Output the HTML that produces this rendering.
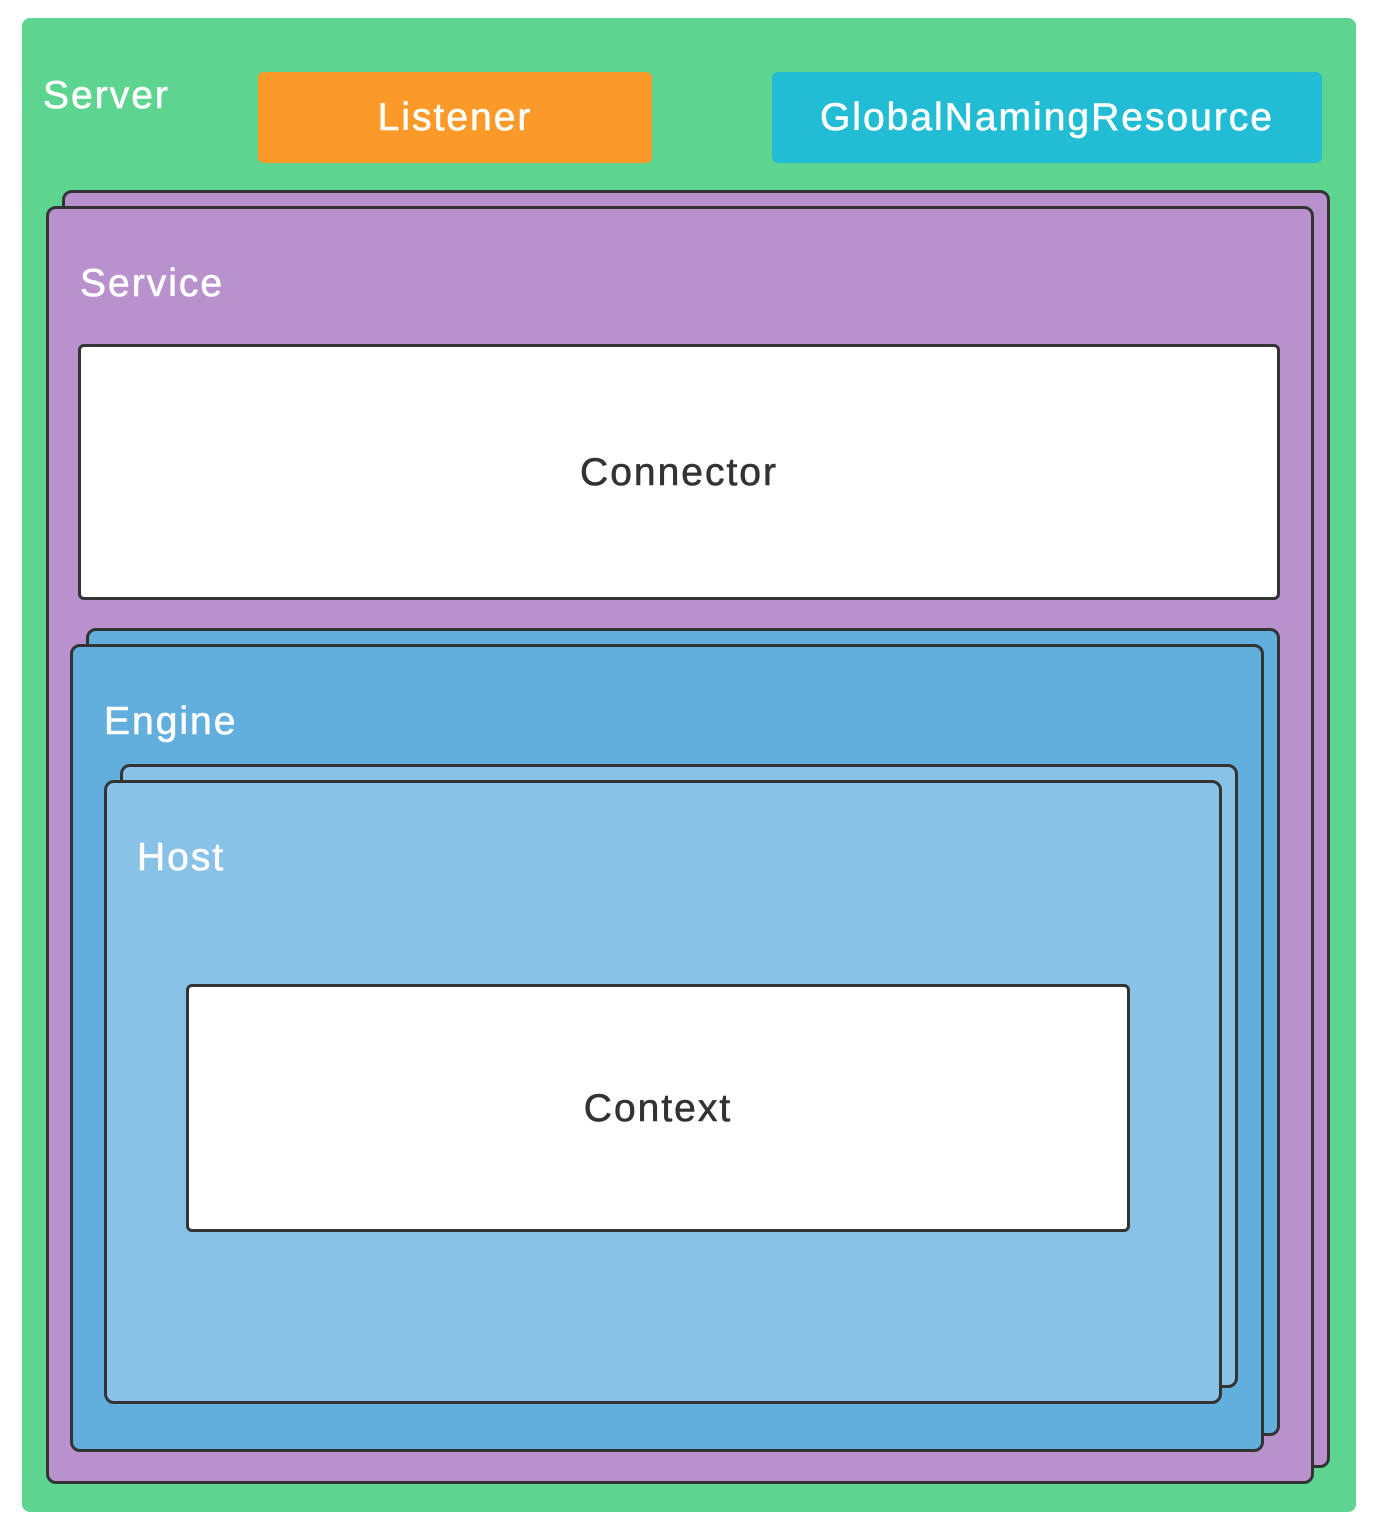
<!DOCTYPE html>
<html><head><meta charset="utf-8"><style>
html,body{margin:0;padding:0;background:#fff;width:1378px;height:1534px;overflow:hidden;position:relative;font-family:"Liberation Sans",sans-serif}
div{position:absolute;box-sizing:border-box}
.t{font-size:39px;letter-spacing:2px;color:#fff;line-height:1;white-space:nowrap;-webkit-text-stroke:0.6px currentColor}
.c{display:flex;align-items:center;justify-content:center}
.b{border:3px solid #333;border-radius:10px}
</style></head><body>
<div style="left:22px;top:18px;width:1334px;height:1494px;background:#5dd591;border-radius:8px"></div>
<div class="t" style="left:43px;top:76px">Server</div>
<div class="t c" style="left:258px;top:72px;width:394px;height:91px;background:#fb9a29;border-radius:6px">Listener</div>
<div class="t c" style="left:772px;top:72px;width:550px;height:91px;background:#22bdd4;border-radius:6px">GlobalNamingResource</div>

<div class="b" style="left:62px;top:190px;width:1268px;height:1278px;background:#b992cd"></div>
<div class="b" style="left:46px;top:206px;width:1268px;height:1278px;background:#b992cd"></div>
<div class="t" style="left:80px;top:264px">Service</div>
<div class="b t c" style="left:78px;top:344px;width:1202px;height:256px;background:#fff;color:#333;border-radius:6px">Connector</div>

<div class="b" style="left:86px;top:628px;width:1194px;height:808px;background:#62aedd"></div>
<div class="b" style="left:70px;top:644px;width:1194px;height:808px;background:#62aedd"></div>
<div class="t" style="left:104px;top:702px">Engine</div>

<div class="b" style="left:120px;top:764px;width:1118px;height:624px;background:#88c2e6"></div>
<div class="b" style="left:104px;top:780px;width:1118px;height:624px;background:#88c2e6"></div>
<div class="t" style="left:137px;top:838px">Host</div>
<div class="b t c" style="left:186px;top:984px;width:944px;height:248px;background:#fff;color:#333;border-radius:6px">Context</div>
</body></html>
